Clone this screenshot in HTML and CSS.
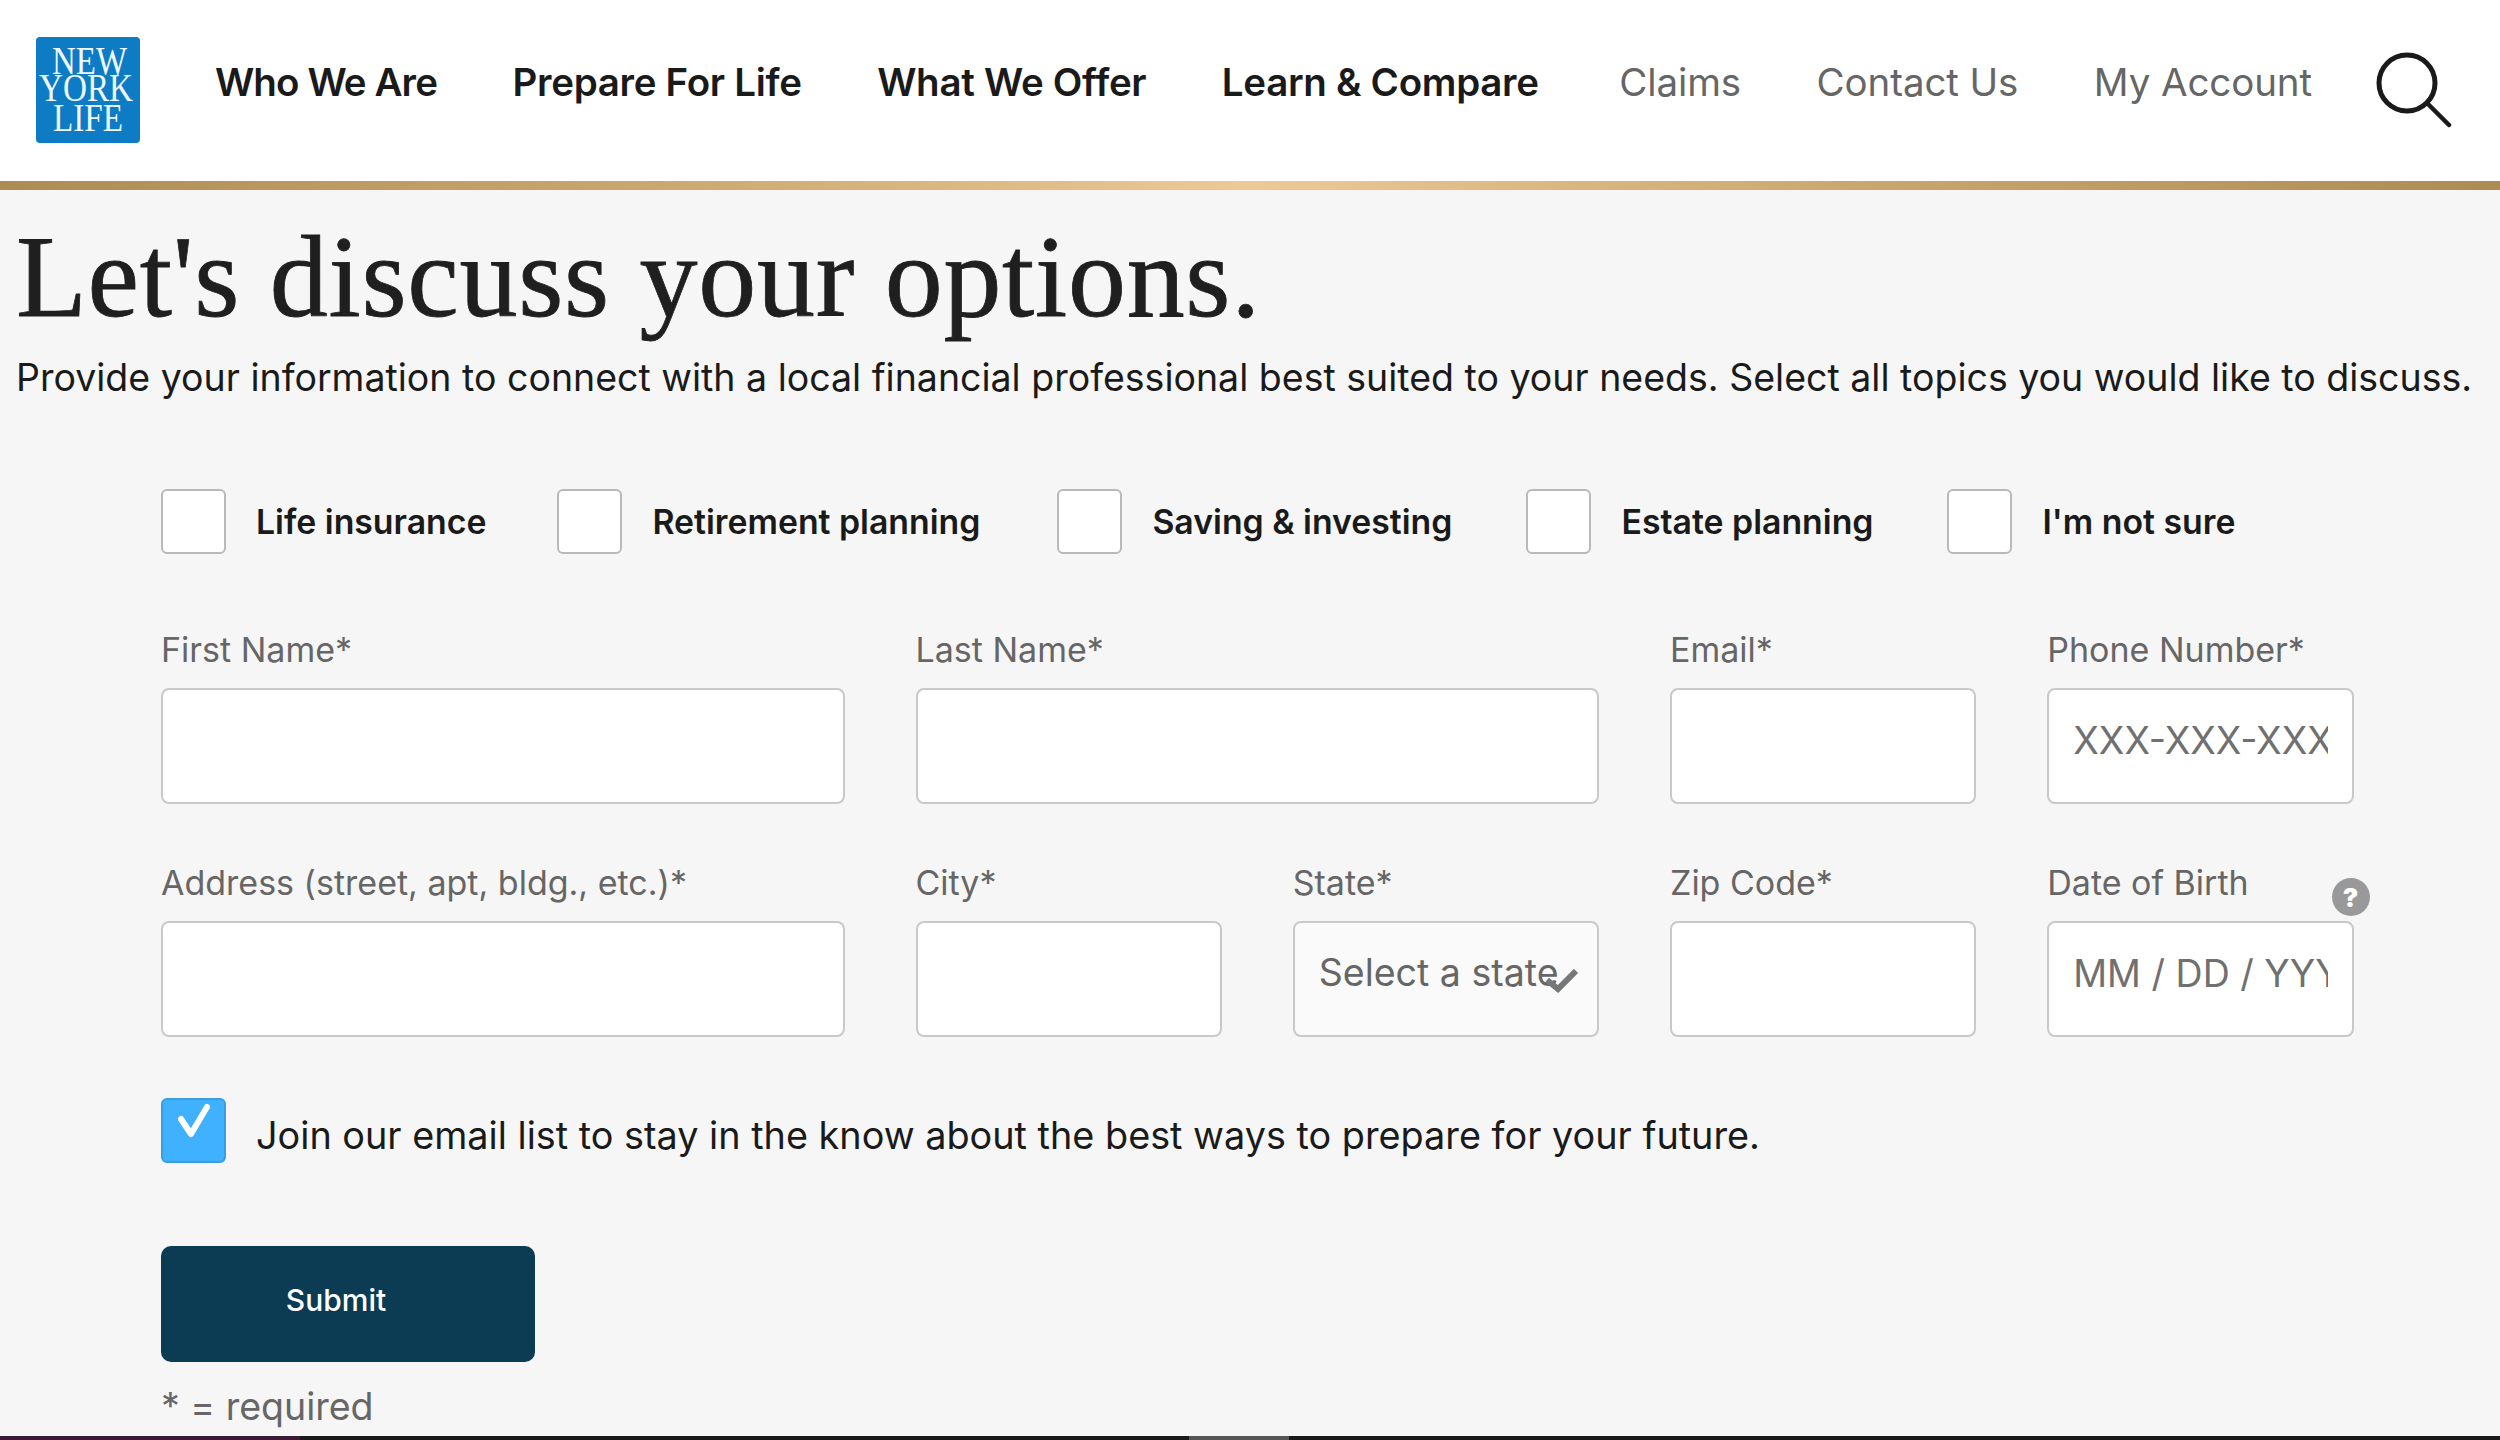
FILE: index.html

```html
<!DOCTYPE html>
<html lang="en">
<head>
  <meta charset="UTF-8" />
  <title>New York Life - Let's discuss your options</title>
  <link rel="stylesheet" href="styles.css">
</head>
<body>
  <header class="site-header">
    <a class="logo" href="#">
      <svg viewBox="0 0 104 106" width="104" height="106" fill="#eef8fd" font-family="Liberation Serif, serif">
        <text class="logo-text" x="16" y="37" textLength="75" lengthAdjust="spacingAndGlyphs">NEW</text>
        <text class="logo-text" x="3" y="64" textLength="94" lengthAdjust="spacingAndGlyphs">YORK</text>
        <text class="logo-text" x="17" y="94" textLength="70" lengthAdjust="spacingAndGlyphs">LIFE</text>
      </svg>
    </a>
    <nav class="main-nav">
      <a class="tight" href="#">Who We Are</a>
      <a href="#">Prepare For Life</a>
      <a href="#">What We Offer</a>
      <a href="#">Learn &amp; Compare</a>
      <a class="secondary first-secondary" href="#">Claims</a>
      <a class="secondary" href="#">Contact Us</a>
      <a class="secondary" href="#">My Account</a>
    </nav>
    <svg class="search-icon" viewBox="0 0 76 76" width="76" height="76" fill="none" stroke="#1a1a1a" stroke-linecap="round">
      <circle cx="31" cy="31" r="28" stroke-width="5"/>
      <path d="M51 51 L73 73" stroke-width="4.5"/>
    </svg>
  </header>
  <div class="gold-bar"></div>

  <main class="content">
    <h1>Let's discuss your options.</h1>
    <p class="intro">Provide your information to connect with a local financial professional best suited to your needs. Select all topics you would like to discuss.</p>

    <form class="lead-form">
      <div class="topics">
        <label class="topic t1"><span class="box"></span>Life insurance</label>
        <label class="topic t2"><span class="box"></span>Retirement planning</label>
        <label class="topic t3"><span class="box"></span>Saving &amp; investing</label>
        <label class="topic t4"><span class="box"></span>Estate planning</label>
        <label class="topic"><span class="box"></span>I'm not sure</label>
      </div>

      <div class="fields">
        <div class="field wide"><label>First Name*</label><input type="text"></div>
        <div class="field wide"><label>Last Name*</label><input type="text"></div>
        <div class="field"><label>Email*</label><input type="text"></div>
        <div class="field"><label>Phone Number*</label><input type="text" placeholder="XXX-XXX-XXXX"></div>

        <div class="field wide"><label>Address (street, apt, bldg., etc.)*</label><input type="text"></div>
        <div class="field"><label>City*</label><input type="text"></div>
        <div class="field">
          <label>State*</label>
          <div class="select">Select a state
            <svg class="select-check" viewBox="0 0 34 24" width="34" height="24" fill="none" stroke="#777" stroke-width="6"><path d="M2 11 L13 20 L31 2"/></svg>
          </div>
        </div>
        <div class="field"><label>Zip Code*</label><input type="text"></div>
        <div class="field dob">
          <label>Date of Birth</label>
          <input type="text" placeholder="MM / DD / YYYY">
          <span class="help">?</span>
        </div>
      </div>

      <label class="optin">
        <span class="box checked">
          <svg viewBox="0 0 61 61" width="61" height="61" fill="none" stroke="#fff" stroke-width="6" stroke-linecap="round" stroke-linejoin="round"><path d="M18 19 L28 34 L44 7"/></svg>
        </span>
        <span class="optin-text">Join our email list to stay in the know about the best ways to prepare for your future.</span>
      </label>

      <button class="submit" type="button"><span>Submit</span></button>
      <div class="required">* = required</div>
    </form>
  </main>

  <div class="bottom-edge"><span class="edge-left"></span><span class="edge-thumb"></span></div>
</body>
</html>
```

FILE: styles.css

```css
* { box-sizing: border-box; }
html, body { height: 100%; }
body { margin: 0; height: 1440px; overflow: hidden; display: flex; flex-direction: column; background: #f6f6f6; color: #1a1a1a; font-family: "Inter", "Liberation Sans", sans-serif; }

.site-header { height: 181px; flex: none; background: #fff; display: flex; align-items: center; padding-left: 36px; }
.logo { width: 104px; height: 106px; flex: none; background: #0e7cc5; border-radius: 4px; margin-top: -2px; }
.logo svg { display: block; overflow: visible; }
.logo-text { font-size: 41px; }
.main-nav { display: flex; align-items: center; gap: 75.5px; margin-left: 75px; margin-bottom: 18px; font-size: 38.5px; letter-spacing: -0.3px; }
.main-nav a { color: #1a1a1a; text-decoration: none; font-weight: 600; }
.main-nav a.tight { letter-spacing: -0.9px; }
.main-nav a.secondary { color: #666; font-weight: 400; letter-spacing: -0.1px; }
.main-nav a.first-secondary { margin-left: 5px; }
.search-icon { margin-left: 64px; margin-bottom: 2px; flex: none; }

.gold-bar { height: 9px; flex: none; background: linear-gradient(90deg, #ad8c52 0%, #c9a66c 25%, #ecc996 50%, #c9a66c 75%, #ad8c52 100%); }

.content { flex: 1; padding: 0 16px; min-height: 0; }
h1 { margin: 32px 0 0; font-family: "Liberation Serif", serif; font-weight: 400; font-size: 116px; line-height: 110px; color: #1f1f1f; letter-spacing: 0.7px; -webkit-text-stroke: 0.8px #1f1f1f; }
.intro { margin: 21px 0 0; font-size: 37.5px; line-height: 50px; white-space: nowrap; color: #1a1a1a; }

.lead-form { padding-left: 145px; }
.topics { display: flex; margin-top: 86px; font-size: 33.8px; font-weight: 600; }
.topic { display: flex; align-items: center; gap: 30px; }
.t1 { margin-right: 71px; }
.t2 { margin-right: 77px; }
.t3, .t4 { margin-right: 74px; }
.box { width: 65px; height: 65px; flex: none; background: #fff; border: 2px solid #b9b9b9; border-radius: 6px; display: flex; align-items: center; justify-content: center; }
.box.checked { background: #3fb1ff; border-color: #3a9de0; }

.fields { display: grid; grid-template-columns: repeat(6, 306.25px); column-gap: 71px; row-gap: 59px; margin-top: 76px; }
.field { position: relative; display: flex; flex-direction: column; font-size: 34px; color: #666; }
.field.wide { grid-column: span 2; }
.field label { height: 58px; line-height: 40px; }
.field input, .select { width: 100%; height: 116px; background: #fff; border: 2px solid #c9c9c9; border-radius: 8px; font: inherit; font-size: 37.5px; color: #666; padding: 0 24px 12px; outline: none; }
.field input::placeholder { color: #707070; opacity: 1; }
.select { background: #fafafa; display: flex; align-items: center; white-space: nowrap; position: relative; padding-bottom: 14px; }
.select-check { position: absolute; right: 18px; top: 46px; }
.help { position: absolute; top: 15px; right: -16px; width: 38px; height: 38px; border-radius: 50%; background: #999; color: #fff; font-size: 26px; font-weight: 900; display: flex; align-items: center; justify-content: center; }

.optin { display: flex; align-items: center; gap: 30px; margin-top: 61px; font-size: 37.8px; color: #1a1a1a; }
.optin-text { padding-top: 9px; }
.submit { display: block; margin-top: 83px; width: 374px; height: 116px; background: #0b3c54; border: none; border-radius: 10px; color: #fff; font: inherit; font-size: 30px; font-weight: 500; padding: 0 24px 8px 0; }
.required { margin-top: 22px; font-size: 37.5px; line-height: 46px; color: #666; white-space: nowrap; }

.bottom-edge { height: 4px; flex: none; background: #1a1a1a; position: relative; display: flex; }
.edge-left { width: 300px; background: #3a1a34; }
.edge-thumb { width: 100px; margin-left: 889px; background: #555; }
```
